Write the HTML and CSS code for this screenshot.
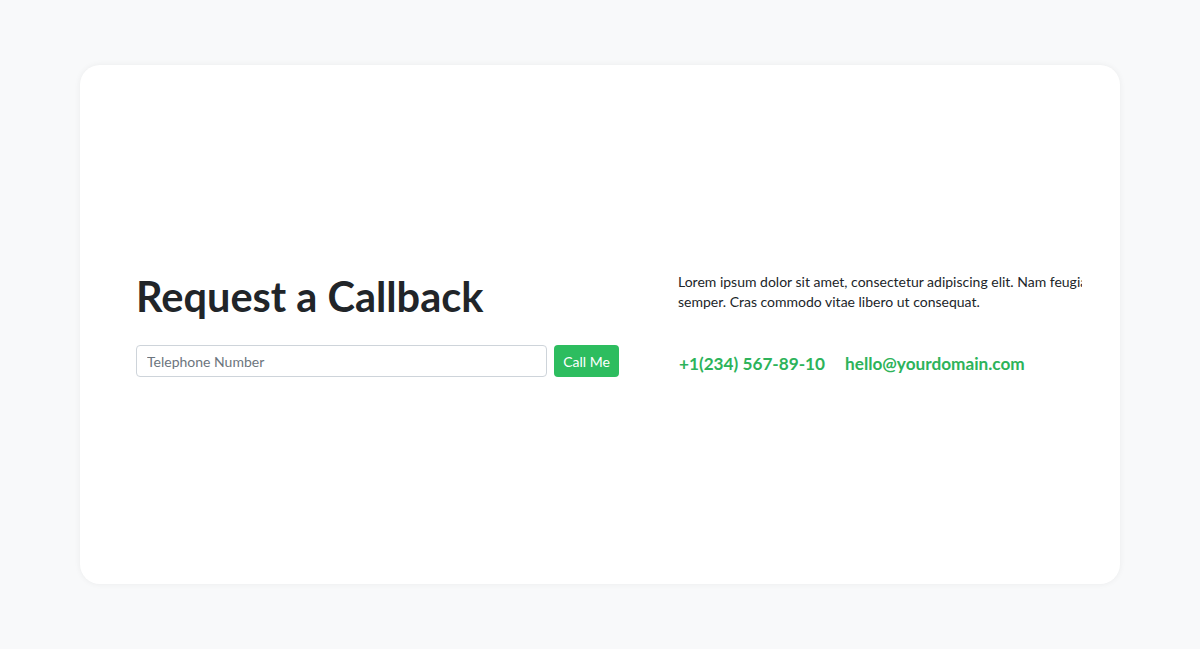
FILE: index.html
```html
<!DOCTYPE html>
<html lang="en">
<head>
<meta charset="utf-8">
<title>Request a Callback</title>
<link rel="stylesheet" href="styles.css">
</head>
<body>
<main class="card">
  <section class="col-left">
    <h1 class="title">Request a Callback</h1>
    <form class="form">
      <input class="input" type="text" placeholder="Telephone Number">
      <button class="btn" type="button">Call Me</button>
    </form>
  </section>
  <section class="col-right">
    <p class="text">Lorem ipsum dolor sit amet, consectetur adipiscing elit. Nam feugiat semper. Cras commodo vitae libero ut consequat.</p>
    <div class="contacts">
      <a class="contact" href="#">+1(234) 567-89-10</a>
      <a class="contact" href="#">hello@yourdomain.com</a>
    </div>
  </section>
</main>
</body>
</html>
```

FILE: styles.css
```css
* { box-sizing: border-box; }
html, body { margin: 0; height: 100%; }
body {
  background: #f8f9fa;
  font-family: "Lato", "Open Sans", sans-serif;
  color: #212529;
  padding: 65px 80px;
}
.card {
  height: 519px;
  background: #fff;
  border-radius: 20px;
  box-shadow: 0 0 6px rgba(0,0,0,0.06);
  display: flex;
  align-items: center;
  padding-left: 56px;
  gap: 59px;
}
.col-left { width: 483px; }
.title {
  margin: 0 0 25px;
  font-size: 41.5px;
  line-height: 48px;
  font-weight: 700;
  color: #212529;
}
.form { display: flex; gap: 7px; }
.input {
  flex: 1;
  height: 32px;
  border: 1px solid #ced4da;
  border-radius: 4px;
  padding: 0 10px;
  font-family: inherit;
  font-size: 14px;
  color: #212529;
}
.input::placeholder { color: #6c757d; }
.btn {
  height: 32px;
  width: 65px;
  border: 0;
  border-radius: 4px;
  background: #2dbd5f;
  color: #fff;
  font-family: inherit;
  font-size: 14px;
  padding: 0;
}
.col-right { width: 404px; overflow: hidden; margin-bottom: 1px; }
.text {
  width: 425px;
  margin: 0 0 40px;
  font-size: 14px;
  line-height: 20px;
  color: #212529;
}
.contacts { display: flex; gap: 20px; padding-left: 1px; }
.contact {
  color: #2db35a;
  font-weight: 700;
  font-size: 17.2px;
  line-height: 24px;
  text-decoration: none;
}
```
